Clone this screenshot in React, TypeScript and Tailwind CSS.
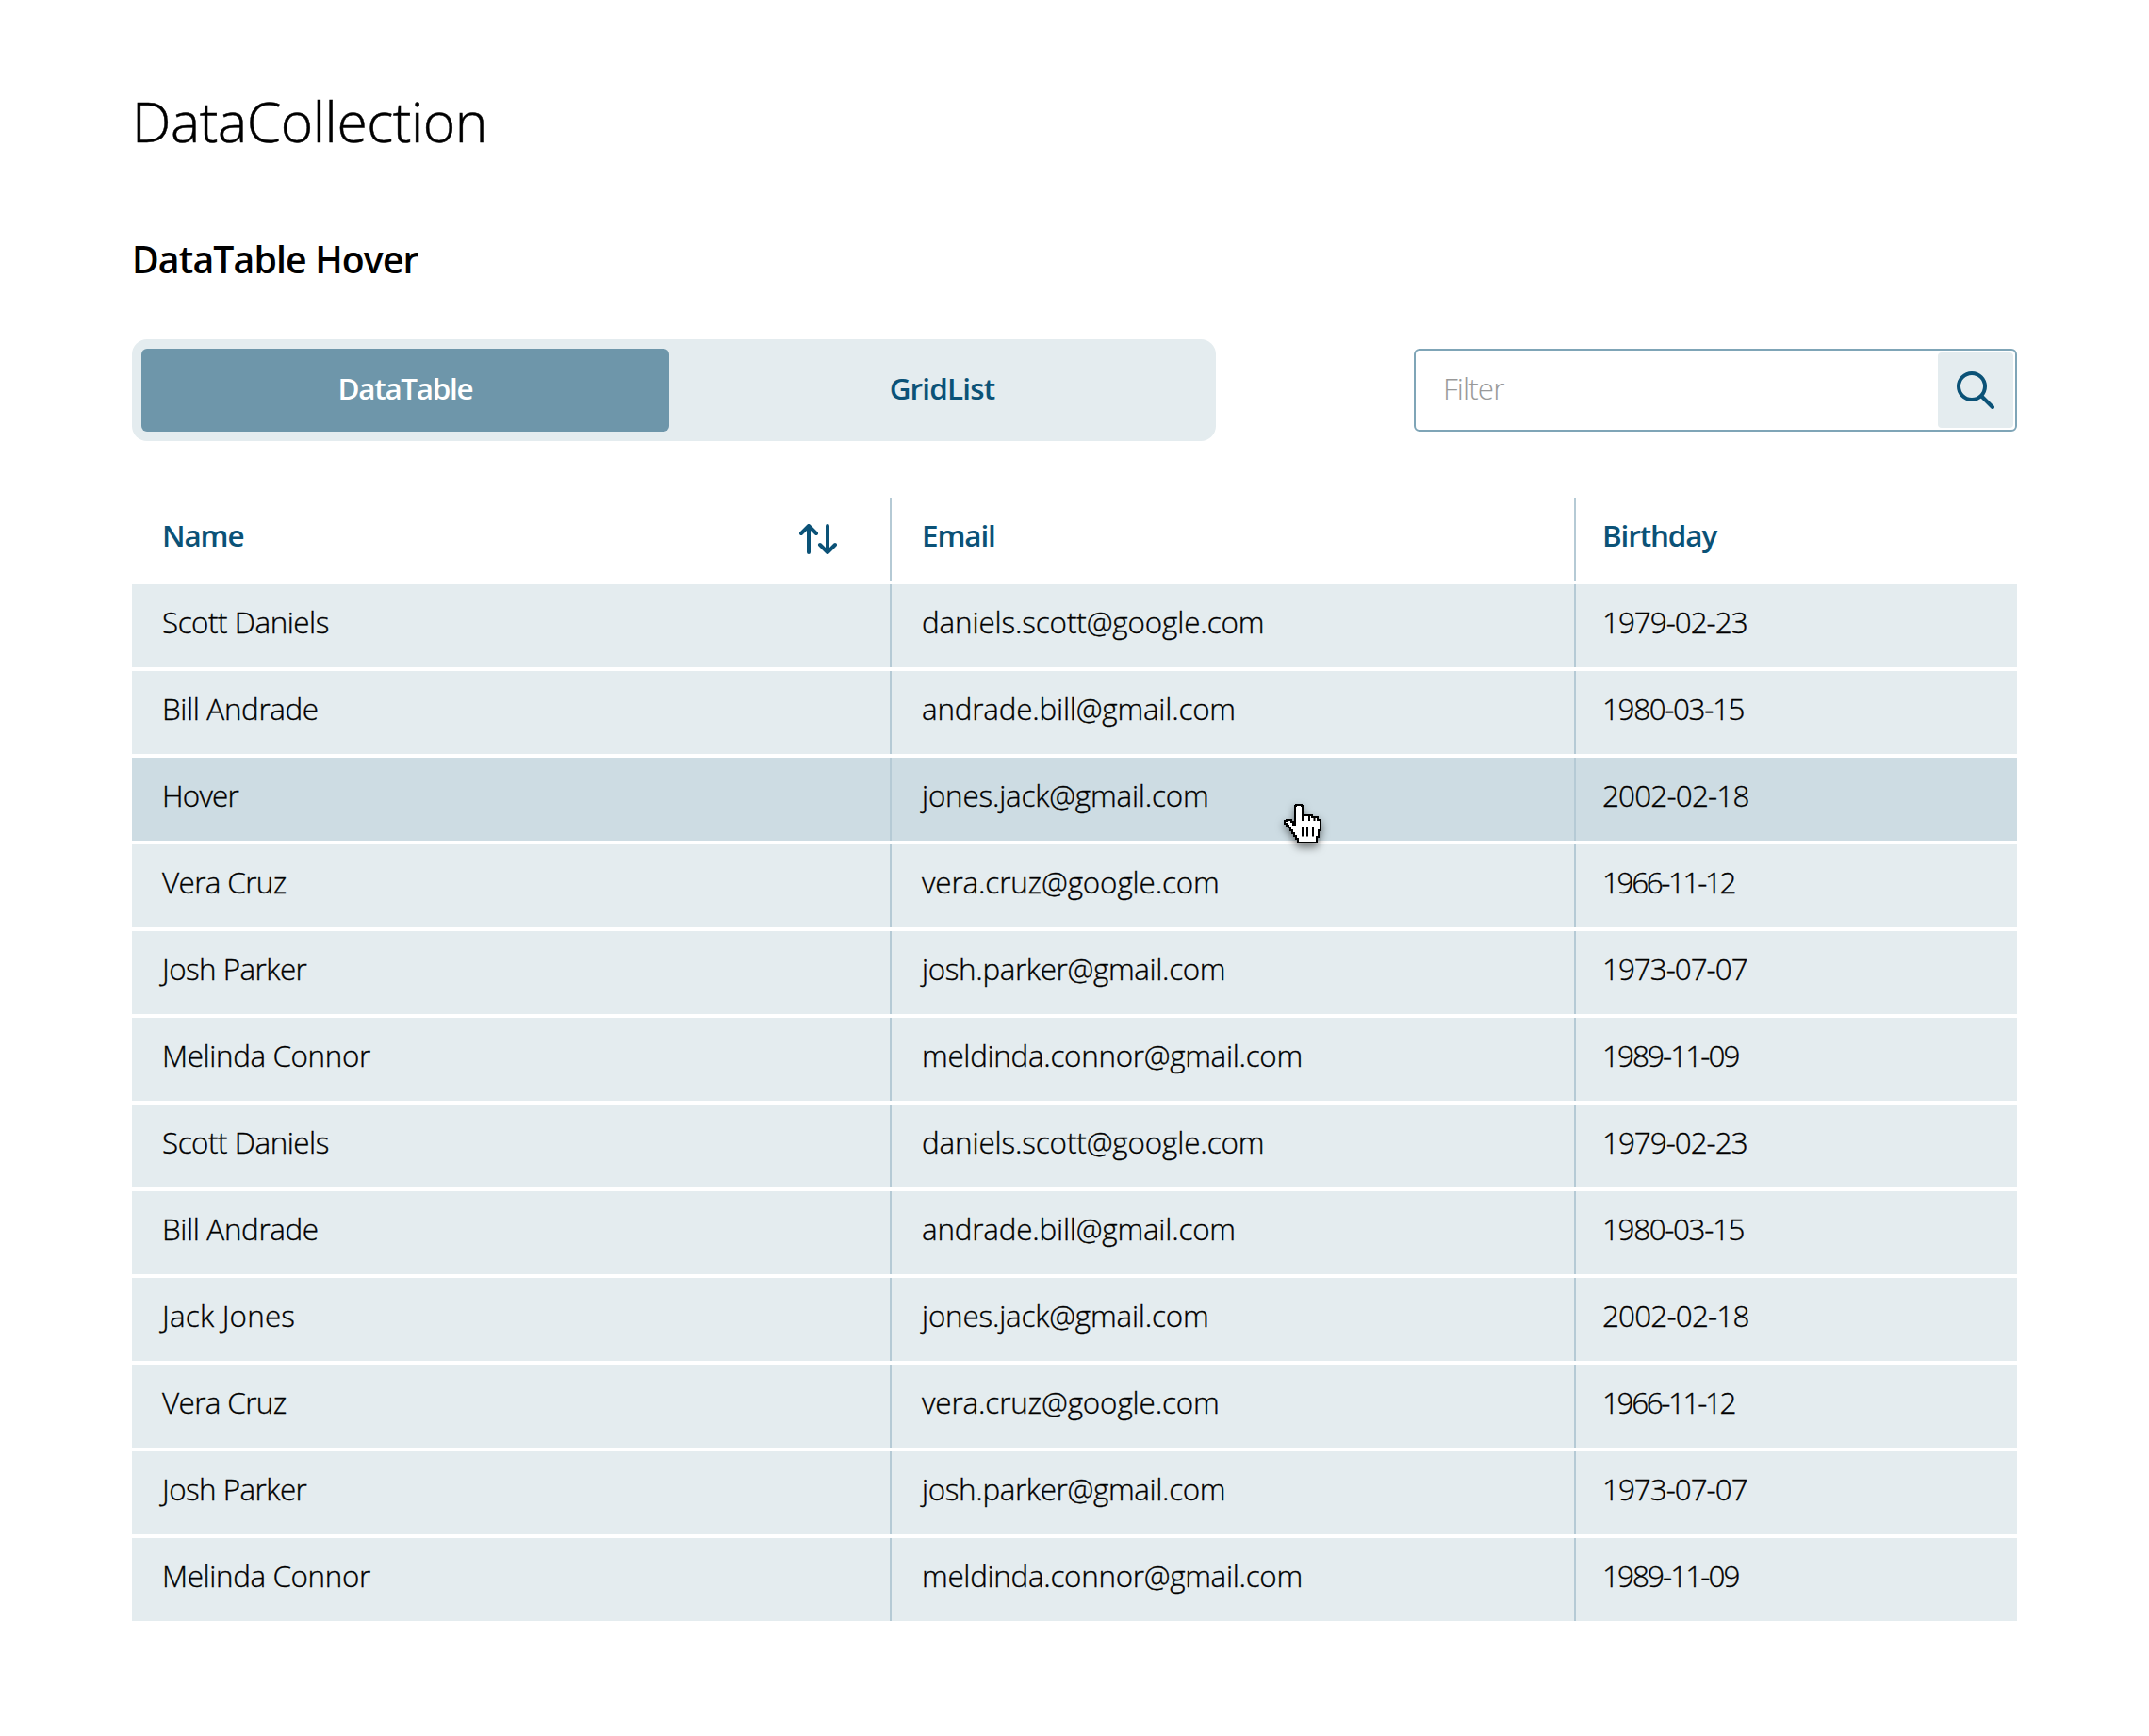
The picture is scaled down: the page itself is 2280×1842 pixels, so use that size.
type Row = { name: string; email: string; birthday: string };

const people: Record<string, Row> = {
  scott: { name: "Scott Daniels", email: "daniels.scott@google.com", birthday: "1979-02-23" },
  bill: { name: "Bill Andrade", email: "andrade.bill@gmail.com", birthday: "1980-03-15" },
  jack: { name: "Jack Jones", email: "jones.jack@gmail.com", birthday: "2002-02-18" },
  vera: { name: "Vera Cruz", email: "vera.cruz@google.com", birthday: "1966-11-12" },
  josh: { name: "Josh Parker", email: "josh.parker@gmail.com", birthday: "1973-07-07" },
  melinda: { name: "Melinda Connor", email: "meldinda.connor@gmail.com", birthday: "1989-11-09" },
};

const rows: Row[] = [
  people.scott,
  people.bill,
  { ...people.jack, name: "Hover" },
  people.vera,
  people.josh,
  people.melinda,
  people.scott,
  people.bill,
  people.jack,
  people.vera,
  people.josh,
  people.melinda,
];

const tracking: Record<string, string> = {
  "Bill Andrade": "tracking-[-0.35px]",
  "Jack Jones": "tracking-[0.2px]",
  "Vera Cruz": "tracking-[-0.6px]",
  "Josh Parker": "tracking-[-0.55px]",
  "Melinda Connor": "tracking-[-0.38px]",
  Hover: "tracking-[-0.8px]",
  "andrade.bill@gmail.com": "tracking-[-0.2px]",
  "jones.jack@gmail.com": "tracking-[-0.2px]",
  "josh.parker@gmail.com": "tracking-[-0.35px]",
  "meldinda.connor@gmail.com": "tracking-[-0.3px]",
  "1979-02-23": "tracking-[-1px]",
  "1980-03-15": "tracking-[-1.35px]",
  "2002-02-18": "tracking-[-0.8px]",
  "1966-11-12": "tracking-[-2.35px]",
  "1973-07-07": "tracking-[-1px]",
  "1989-11-09": "tracking-[-1.9px]",
};

const columns = "grid grid-cols-[806px_726px_468px] h-[88px]";

function SortIcon() {
  return (
    <svg className="h-8 w-10" viewBox="0 0 40 32" fill="none" stroke="#0b5277" strokeWidth="4" strokeLinecap="round" strokeLinejoin="round">
      <path d="M10 30V2M2 10l8-8 8 8" />
      <path d="M30 2v28M22 22l8 8 8-8" />
    </svg>
  );
}

function SearchIcon() {
  return (
    <svg className="size-10" viewBox="0 0 40 40" fill="none" stroke="#0b5277" strokeWidth="4" strokeLinecap="round">
      <circle cx="16" cy="16" r="14" />
      <path d="M26.5 26.5L38 38" />
    </svg>
  );
}

function HandCursor() {
  return (
    <svg
      className="absolute left-[1220px] top-[46px] z-10 h-12 w-11 overflow-visible drop-shadow-[0_4px_4px_rgba(0,0,0,0.5)]"
      viewBox="0 0 44 48"
      fill="none"
      stroke="#000"
      strokeWidth="2"
    >
      <path
        fill="#fff"
        d="M14 5H15V4H21V5H22V15H32V17H38V20H41V31H39V38H37V44H17V40H15V37H13V34H11V31H9V28H7V26H5V24H3V21H5V20H10V22H12V25H14Z"
      />
      <path d="M22 14V21M29 15V21M34.500 17V21M22 27V37.500M27 27V37.500M33 27V37.500" />
    </svg>
  );
}

export default function App() {
  return (
    <main className="min-h-[1842px] w-[2280px] bg-white px-[140px] pt-[88px] font-['Open_Sans',sans-serif] text-[31.4px] text-black">
      <h1 className="text-[58.8px] leading-[80px] font-light tracking-[-0.45px] [-webkit-text-stroke:0.5px_#000]">DataCollection</h1>
      <h2 className="mt-[79px] text-[39.2px] leading-[56px] font-semibold tracking-[-0.85px]">DataTable Hover</h2>

      <div className="mt-[57px] flex items-center justify-between">
        <div className="flex h-[108px] w-[1150px] rounded-2xl bg-[#e4ecef] p-[10px] font-semibold">
          <button className="h-[88px] w-[560px] rounded-md bg-[#6e96aa] pb-[5px] tracking-[-1.25px] text-white">DataTable</button>
          <button className="h-[88px] flex-1 pb-[5px] pl-[9px] tracking-[-0.8px] text-[#0b5277]">GridList</button>
        </div>
        <div className="flex h-[88px] w-[640px] items-center justify-between rounded-md border-2 border-[#7fa5b7] pr-[2px] pl-[29px]">
          <span className="pb-[5px] font-light tracking-[-0.9px] text-[#999]">Filter</span>
          <button className="grid size-20 place-items-center rounded-sm bg-[#e4ecef]">
            <SearchIcon />
          </button>
        </div>
      </div>

      <div className="mt-[60px] flex flex-col gap-1">
        <div className={`${columns} font-semibold tracking-[-1.1px] text-[#0b5277]`}>
          <div className="flex items-center justify-between border-r-2 border-[#b5cad5] pr-14 pl-8">
            <span className="pb-[9px]">Name</span>
            <SortIcon />
          </div>
          <div className="flex items-center border-r-2 border-[#b5cad5] pb-[9px] pl-8">Email</div>
          <div className="flex items-center pb-[9px] pl-7">Birthday</div>
        </div>
        {rows.map((row, i) => (
          <div
            key={i}
            className={`${columns} relative font-light [-webkit-text-stroke:0.35px_#000] ${i === 2 ? "bg-[#cddce3]" : "bg-[#e4ecef]"}`}
          >
            <div className={`flex items-center border-r-2 border-[#b5cad5] pb-[9px] pl-8 ${tracking[row.name] ?? "tracking-[-0.47px]"}`}>
              {row.name}
            </div>
            <div className={`flex items-center border-r-2 border-[#b5cad5] pb-[9px] pl-8 ${tracking[row.email] ?? "tracking-[-0.13px]"}`}>
              {row.email}
            </div>
            <div className={`flex items-center pb-[9px] pl-7 ${tracking[row.birthday]}`}>{row.birthday}</div>
            {i === 2 && <HandCursor />}
          </div>
        ))}
      </div>
    </main>
  );
}
